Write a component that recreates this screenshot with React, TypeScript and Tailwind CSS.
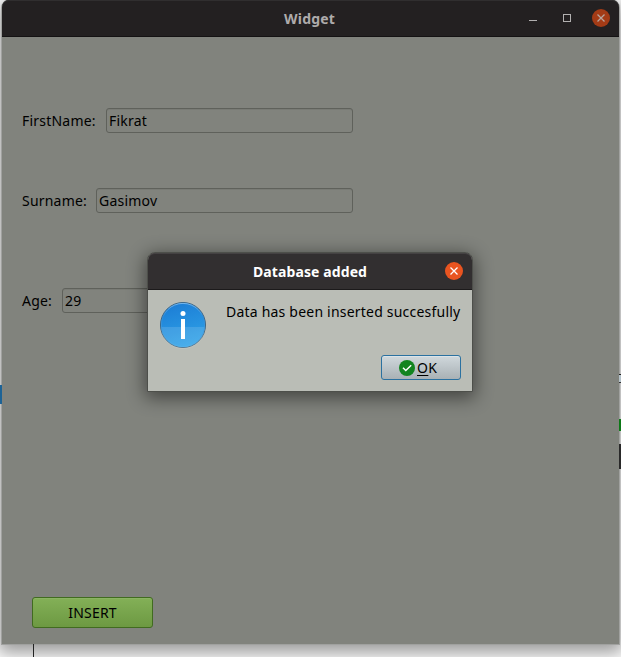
import React from "react";

function Field({ label, value, gap, width }: { label: string; value: string; gap: string; width: string }) {
  return (
    <div className="flex h-[25px] items-center">
      <label className={`shrink-0 whitespace-nowrap ${gap}`}>{label}</label>
      <div
        className={`flex h-[25px] shrink-0 items-center rounded-[3px] border border-[#5f615b] bg-[#81837d] pl-[2px] shadow-[inset_0_1px_0_#797b75] ${width}`}
      >
        <span>{value}</span>
      </div>
    </div>
  );
}

function CloseIcon({ stroke }: { stroke: string }) {
  return (
    <svg width="8" height="8" viewBox="0 0 8 8" fill="none" stroke={stroke} strokeWidth="1.3">
      <path d="M0.5 0.5 7.5 7.5M7.5 0.5 0.5 7.5" />
    </svg>
  );
}

function InfoIcon() {
  return (
    <svg width="48" height="48" viewBox="0 0 48 48" className="block">
      <defs>
        <linearGradient id="disc" x1="0.3" y1="0" x2="0.6" y2="1">
          <stop offset="0" stopColor="#1c7dd5" />
          <stop offset="1" stopColor="#2fa3e8" />
        </linearGradient>
        <linearGradient id="rim" x1="0" y1="0" x2="0" y2="1">
          <stop offset="0" stopColor="#7ebcf0" />
          <stop offset="0.3" stopColor="#2e8bd9" />
          <stop offset="1" stopColor="#52b2ec" />
        </linearGradient>
      </defs>
      <circle cx="24" cy="24" r="22.5" fill="url(#disc)" stroke="#3c6482" />
      <path d="M2 26H46A22 22 0 0 1 2 26Z" fill="#fff" fillOpacity="0.13" />
      <circle cx="24" cy="24" r="21.6" fill="none" stroke="url(#rim)" strokeWidth="0.9" />
      <circle cx="24" cy="12.4" r="2.5" fill="#fff" />
      <path d="M22 18h4v20h-4z" fill="#fff" />
    </svg>
  );
}

function MessageDialog() {
  return (
    <div className="absolute left-[147px] top-[252px] flex h-[140px] w-[326px] flex-col overflow-visible rounded-t-[8px] border border-[#4d4f4a] bg-[#babdb6] shadow-[0_4px_18px_2px_rgba(0,0,0,0.48)]">
      <div className="flex h-[37px] shrink-0 items-center rounded-t-[7px] border-b border-[#1c1a1b] bg-[#322f30] shadow-[inset_0_1px_0_#454243]">
        <div className="flex-1 pl-[105px]">
          <span className="whitespace-nowrap text-[14px] font-bold tracking-[0.1px] text-white">Database added</span>
        </div>
        <div className="mr-[9px] flex h-[18px] w-[18px] items-center justify-center rounded-full bg-[#e95420]">
          <CloseIcon stroke="#fff" />
        </div>
      </div>
      <div className="flex pl-[11px] pt-[11px]">
        <InfoIcon />
        <span className="ml-[19px] whitespace-nowrap leading-[22px]">Data has been inserted succesfully</span>
      </div>
      <div className="mr-[11px] mt-[6px] flex h-[25px] w-[80px] items-center self-end rounded-[3px] border border-[#2b71a0] bg-linear-to-b from-[#d0d8dc] to-[#a9b1b5] pl-[17px] shadow-[inset_0_1px_0_#dbe3e7]">
        <svg width="16" height="16" viewBox="0 0 16 16" className="mr-[2px] shrink-0">
          <circle cx="8" cy="8" r="8" fill="#12841f" />
          <path d="m4 7.8 2.8 2.7L12.2 5.3" fill="none" stroke="#fff" strokeWidth="1.5" />
        </svg>
        <span className="whitespace-nowrap leading-[23px] tracking-[0.4px]">
          <span className="underline decoration-1 underline-offset-[2px]">O</span>K
        </span>
      </div>
    </div>
  );
}

export default function App() {
  return (
    <div className="relative h-[657px] w-[621px] overflow-hidden bg-white px-[2px] font-['Noto_Sans',sans-serif] text-[14px] tracking-[0.21px] text-black">
      <div className="absolute left-0 top-[385px] h-[19px] w-[2px] bg-[#1d6396]" />
      <main className="flex h-[644px] w-[617px] flex-col rounded-t-[8px] bg-[#81837d] shadow-[0_0_0_1px_#a0a19f,0_5px_18px_4px_rgba(0,0,0,0.4)]">
        <header className="flex h-[37px] shrink-0 items-center rounded-t-[7px] border-b border-[#141213] bg-[#232021] shadow-[inset_0_1px_0_#302e2f]">
          <div className="flex-1 pl-[282px]">
            <span className="font-bold text-[#aeabab]">Widget</span>
          </div>
          <div className="mr-[26px] mt-[5px] h-px w-[8px] bg-[#b2b0b0]" />
          <div className="mr-[21px] h-[8px] w-[8px] border border-[#b2b0b0]" />
          <div className="mr-[9px] flex h-[18px] w-[18px] items-center justify-center rounded-full bg-[#a33b16]">
            <CloseIcon stroke="#b7a59e" />
          </div>
        </header>
        <section className="flex flex-1 flex-col pl-[20px] pt-[71px]">
          <Field label="FirstName:" value="Fikrat" gap="w-[84px]" width="w-[247px]" />
          <div className="mt-[55px]">
            <Field label="Surname:" value="Gasimov" gap="w-[74px]" width="w-[257px]" />
          </div>
          <div className="mt-[75px]">
            <Field label="Age:" value="29" gap="w-[40px]" width="w-[291px]" />
          </div>
          <button className="ml-[10px] mt-[284px] flex h-[31px] w-[121px] items-center justify-center rounded-[3px] border border-[#416b20] bg-linear-to-b from-[#83b057] to-[#6d9942] shadow-[inset_0_1px_0_#8bb463]">
            INSERT
          </button>
        </section>
      </main>
      <MessageDialog />
      <div className="absolute left-[33px] top-[644px] h-[13px] w-px bg-[#222]" />
      <div className="absolute left-[619px] top-[374px] h-px w-[2px] bg-[#222]" />
      <div className="absolute left-[619px] top-[375px] h-[7px] w-[2px] bg-[#b5c3cb]" />
      <div className="absolute left-[619px] top-[382px] h-px w-[2px] bg-[#333]" />
      <div className="absolute left-[619px] top-[419px] h-[12px] w-[2px] bg-[#0d7817]" />
      <div className="absolute left-[619px] top-[444px] h-[25px] w-[2px] bg-[#292929]" />
    </div>
  );
}
